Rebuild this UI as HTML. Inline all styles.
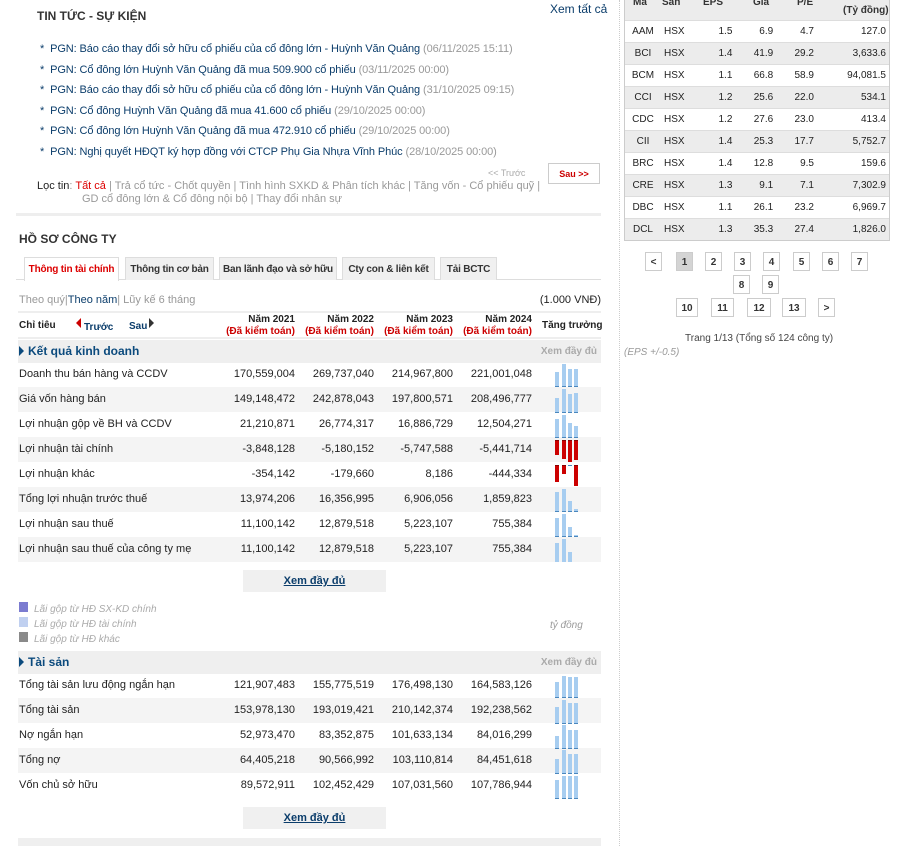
<!DOCTYPE html>
<html><head><meta charset="utf-8"><style>
*{margin:0;padding:0;box-sizing:border-box}
body{width:897px;height:846px;overflow:hidden;background:#fff;font-family:"Liberation Sans",Arial,sans-serif;font-size:11px;color:#222;position:relative}
.a{position:absolute;white-space:nowrap}
.blue{color:#0b3d6b}
.gray{color:#999}
.row{position:absolute;left:18px;width:583px;height:25px}
.row.g{background:#f4f4f4}
.row span{position:absolute;top:6px;white-space:nowrap;font-size:11px;color:#222}
.row .l{left:1px}
.v1{right:306px}.v2{right:227px}.v3{right:148px}.v4{right:69px}
.bar{position:absolute;width:4px;background:#a7cdf0}
.bar.p{border-bottom:1px solid #4a87bd}
.bar.n{background:#cc0000;border-top:1px solid #800}
.sec{position:absolute;left:18px;width:583px;height:23px;background:#efefef}
.sec b{position:absolute;left:10px;top:4px;font-size:12px;color:#0b4a7d}
.sec i{position:absolute;left:1px;top:6px;width:0;height:0;border-left:5px solid #0b4a7d;border-top:5px solid transparent;border-bottom:5px solid transparent}
.sec em{position:absolute;right:4px;top:6px;font-style:normal;font-weight:bold;font-size:10px;color:#aaa}
.btn{position:absolute;left:243px;width:143px;height:22px;background:#f0f0f0;text-align:center;padding-top:5px}
.btn a{color:#0b3d6b;font-weight:bold;font-size:11px;text-decoration:underline}
.tab{position:absolute;top:257px;height:23px;background:#f0f0f0;border:1px solid #ddd;border-bottom:none;text-align:center;padding-top:6px;font-size:10px;font-weight:bold;color:#333;white-space:nowrap;letter-spacing:-0.2px}
.rt td{height:22px;font-size:10px;color:#222;border-top:1px solid #ddd;padding:0 3px}
.pg{position:absolute;width:17px;height:19px;border:1px solid #ccc;background:#fff;text-align:center;font-weight:bold;font-size:10px;color:#333;padding-top:4px}
</style></head><body>

<div class="a" style="left:37px;top:9px;font-size:12px;font-weight:bold;color:#333">TIN TỨC - SỰ KIỆN</div>
<div class="a" style="left:550px;top:2px;font-size:12px;color:#0b3d6b">Xem tất cả</div>
<div class="a blue" style="left:40px;top:39px;line-height:20.6px;font-size:11px;letter-spacing:-0.1px">
<div>*&nbsp; PGN: Báo cáo thay đổi sở hữu cổ phiếu của cổ đông lớn - Huỳnh Văn Quảng <span class="gray">(06/11/2025 15:11)</span></div>
<div>*&nbsp; PGN: Cổ đông lớn Huỳnh Văn Quảng đã mua 509.900 cổ phiếu <span class="gray">(03/11/2025 00:00)</span></div>
<div>*&nbsp; PGN: Báo cáo thay đổi sở hữu cổ phiếu của cổ đông lớn - Huỳnh Văn Quảng <span class="gray">(31/10/2025 09:15)</span></div>
<div>*&nbsp; PGN: Cổ đông Huỳnh Văn Quảng đã mua 41.600 cổ phiếu <span class="gray">(29/10/2025 00:00)</span></div>
<div>*&nbsp; PGN: Cổ đông lớn Huỳnh Văn Quảng đã mua 472.910 cổ phiếu <span class="gray">(29/10/2025 00:00)</span></div>
<div>*&nbsp; PGN: Nghị quyết HĐQT ký hợp đồng với CTCP Phụ Gia Nhựa Vĩnh Phúc <span class="gray">(28/10/2025 00:00)</span></div>
</div>
<div class="a" style="left:488px;top:168px;font-size:9px;color:#aaa">&lt;&lt; Trước</div>
<div class="a" style="left:548px;top:163px;width:52px;height:21px;border:1px solid #ccc;text-align:center;padding-top:5px;font-size:9px;font-weight:bold;color:#c00">Sau &gt;&gt;</div>
<div class="a" style="left:37px;top:180px;font-size:11px;color:#999;line-height:13px"><span style="color:#222">Lọc tin</span>: <span style="color:#d00">Tất cả</span> | Trả cổ tức - Chốt quyền | Tình hình SXKD &amp; Phân tích khác | Tăng vốn - Cổ phiếu quỹ |<br><span style="padding-left:45px">GD cổ đông lớn &amp; Cổ đông nội bộ | Thay đổi nhân sự</span></div>
<div class="a" style="left:16px;top:213px;width:585px;height:3px;background:#eee"></div>

<div class="a" style="left:19px;top:232px;font-size:12px;font-weight:bold;color:#333">HỒ SƠ CÔNG TY</div>
<div class="a" style="left:16px;top:279px;width:585px;height:1px;background:#ddd"></div>
<div class="tab" style="left:24px;width:95px;background:#fff;color:#d00;height:24px">Thông tin tài chính</div>
<div class="tab" style="left:125px;width:89px">Thông tin cơ bản</div>
<div class="tab" style="left:219px;width:118px">Ban lãnh đạo và sở hữu</div>
<div class="tab" style="left:342px;width:93px">Cty con &amp; liên kết</div>
<div class="tab" style="left:440px;width:57px">Tải BCTC</div>

<div class="a" style="left:19px;top:294px;font-size:11px;color:#999">Theo quý|<span style="color:#0b3d6b">Theo năm</span>| Lũy kế 6 tháng</div>
<div class="a" style="right:296px;top:294px;font-size:11px;color:#222">(1.000 VNĐ)</div>
<div class="a" style="left:18px;top:311px;width:583px;height:2px;background:#eee"></div>
<div class="a" style="left:19px;top:320px;font-size:10px;font-weight:bold;color:#222">Chỉ tiêu</div>
<div class="a" style="left:76px;top:318px;width:0;height:0;border-right:5px solid #c00;border-top:5px solid transparent;border-bottom:5px solid transparent"></div>
<div class="a" style="left:84px;top:322px;font-size:10px;font-weight:bold;color:#0b3d6b">Trước</div>
<div class="a" style="left:129px;top:321px;font-size:10px;font-weight:bold;color:#0b3d6b">Sau</div>
<div class="a" style="left:149px;top:318px;width:0;height:0;border-left:5px solid #333;border-top:5px solid transparent;border-bottom:5px solid transparent"></div>
<div class="a" style="left:200px;top:314px;width:95px;text-align:right;font-size:10px;font-weight:bold;line-height:12px">Năm 2021<br><span style="color:#c00">(Đã kiểm toán)</span></div>
<div class="a" style="left:279px;top:314px;width:95px;text-align:right;font-size:10px;font-weight:bold;line-height:12px">Năm 2022<br><span style="color:#c00">(Đã kiểm toán)</span></div>
<div class="a" style="left:358px;top:314px;width:95px;text-align:right;font-size:10px;font-weight:bold;line-height:12px">Năm 2023<br><span style="color:#c00">(Đã kiểm toán)</span></div>
<div class="a" style="left:437px;top:314px;width:95px;text-align:right;font-size:10px;font-weight:bold;line-height:12px">Năm 2024<br><span style="color:#c00">(Đã kiểm toán)</span></div>
<div class="a" style="left:542px;top:320px;font-size:10px;font-weight:bold">Tăng trưởng</div>
<div class="a" style="left:18px;top:337px;width:583px;height:2px;background:#eee"></div>

<div class="sec" style="top:340px"><i></i><b>Kết quả kinh doanh</b><em>Xem đầy đủ</em></div>

<div class="row" style="top:362px"><span class="l">Doanh thu bán hàng và CCDV</span><span class="v1">170,559,004</span><span class="v2">269,737,040</span><span class="v3">214,967,800</span><span class="v4">221,001,048</span></div>
<div class="row g" style="top:387px"><span class="l">Giá vốn hàng bán</span><span class="v1">149,148,472</span><span class="v2">242,878,043</span><span class="v3">197,800,571</span><span class="v4">208,496,777</span></div>
<div class="row" style="top:412px"><span class="l">Lợi nhuận gộp về BH và CCDV</span><span class="v1">21,210,871</span><span class="v2">26,774,317</span><span class="v3">16,886,729</span><span class="v4">12,504,271</span></div>
<div class="row g" style="top:437px"><span class="l">Lợi nhuận tài chính</span><span class="v1">-3,848,128</span><span class="v2">-5,180,152</span><span class="v3">-5,747,588</span><span class="v4">-5,441,714</span></div>
<div class="row" style="top:462px"><span class="l">Lợi nhuận khác</span><span class="v1">-354,142</span><span class="v2">-179,660</span><span class="v3">8,186</span><span class="v4">-444,334</span></div>
<div class="row g" style="top:487px"><span class="l">Tổng lợi nhuận trước thuế</span><span class="v1">13,974,206</span><span class="v2">16,356,995</span><span class="v3">6,906,056</span><span class="v4">1,859,823</span></div>
<div class="row" style="top:512px"><span class="l">Lợi nhuận sau thuế</span><span class="v1">11,100,142</span><span class="v2">12,879,518</span><span class="v3">5,223,107</span><span class="v4">755,384</span></div>
<div class="row g" style="top:537px"><span class="l">Lợi nhuận sau thuế của công ty mẹ</span><span class="v1">11,100,142</span><span class="v2">12,879,518</span><span class="v3">5,223,107</span><span class="v4">755,384</span></div>

<div class="bar p" style="left:555px;top:372px;height:15px"></div><div class="bar p" style="left:562px;top:364px;height:23px"></div><div class="bar p" style="left:568px;top:369px;height:18px"></div><div class="bar p" style="left:574px;top:369px;height:18px"></div>
<div class="bar p" style="left:555px;top:398px;height:15px"></div><div class="bar p" style="left:562px;top:389px;height:24px"></div><div class="bar p" style="left:568px;top:394px;height:19px"></div><div class="bar p" style="left:574px;top:393px;height:20px"></div>
<div class="bar p" style="left:555px;top:419px;height:19px"></div><div class="bar p" style="left:562px;top:415px;height:23px"></div><div class="bar p" style="left:568px;top:423px;height:15px"></div><div class="bar p" style="left:574px;top:426px;height:12px"></div>
<div class="bar n" style="left:555px;top:440px;height:15px"></div><div class="bar n" style="left:562px;top:440px;height:19px"></div><div class="bar n" style="left:568px;top:440px;height:22px"></div><div class="bar n" style="left:574px;top:440px;height:20px"></div>
<div class="bar n" style="left:555px;top:465px;height:17px"></div><div class="bar n" style="left:562px;top:465px;height:9px"></div><div class="bar" style="left:568px;top:465px;height:1px;background:#4a87bd"></div><div class="bar n" style="left:574px;top:465px;height:21px"></div>
<div class="bar p" style="left:555px;top:492px;height:20px"></div><div class="bar p" style="left:562px;top:489px;height:23px"></div><div class="bar p" style="left:568px;top:501px;height:11px"></div><div class="bar p" style="left:574px;top:509px;height:3px"></div>
<div class="bar p" style="left:555px;top:518px;height:19px"></div><div class="bar p" style="left:562px;top:514px;height:23px"></div><div class="bar p" style="left:568px;top:527px;height:10px"></div><div class="bar p" style="left:574px;top:535px;height:2px"></div>
<div class="bar" style="left:555px;top:543px;height:19px"></div><div class="bar" style="left:562px;top:539px;height:23px"></div><div class="bar" style="left:568px;top:552px;height:10px"></div>

<div class="btn" style="top:570px"><a>Xem đầy đủ</a></div>

<div class="a" style="left:19px;top:602px;width:9px;height:10px;background:#7b7bd0"></div>
<div class="a" style="left:19px;top:617px;width:9px;height:10px;background:#c0d0f0"></div>
<div class="a" style="left:19px;top:632px;width:9px;height:10px;background:#8a8a8a"></div>
<div class="a" style="left:34px;top:602px;font-size:10px;font-style:italic;color:#aaa;line-height:15px">Lãi gộp từ HĐ SX-KD chính<br>Lãi gộp từ HĐ tài chính<br>Lãi gộp từ HĐ khác</div>
<div class="a" style="left:550px;top:620px;font-size:10px;font-style:italic;color:#999">tỷ đồng</div>

<div class="sec" style="top:651px"><i></i><b>Tài sản</b><em>Xem đầy đủ</em></div>
<div class="row" style="top:673px"><span class="l">Tổng tài sản lưu động ngắn hạn</span><span class="v1">121,907,483</span><span class="v2">155,775,519</span><span class="v3">176,498,130</span><span class="v4">164,583,126</span></div>
<div class="row g" style="top:698px"><span class="l">Tổng tài sản</span><span class="v1">153,978,130</span><span class="v2">193,019,421</span><span class="v3">210,142,374</span><span class="v4">192,238,562</span></div>
<div class="row" style="top:723px"><span class="l">Nợ ngắn hạn</span><span class="v1">52,973,470</span><span class="v2">83,352,875</span><span class="v3">101,633,134</span><span class="v4">84,016,299</span></div>
<div class="row g" style="top:748px"><span class="l">Tổng nợ</span><span class="v1">64,405,218</span><span class="v2">90,566,992</span><span class="v3">103,110,814</span><span class="v4">84,451,618</span></div>
<div class="row" style="top:773px"><span class="l">Vốn chủ sở hữu</span><span class="v1">89,572,911</span><span class="v2">102,452,429</span><span class="v3">107,031,560</span><span class="v4">107,786,944</span></div>

<div class="bar p" style="left:555px;top:682px;height:16px"></div><div class="bar p" style="left:562px;top:676px;height:22px"></div><div class="bar p" style="left:568px;top:677px;height:21px"></div><div class="bar p" style="left:574px;top:677px;height:21px"></div>
<div class="bar p" style="left:555px;top:707px;height:17px"></div><div class="bar p" style="left:562px;top:700px;height:24px"></div><div class="bar p" style="left:568px;top:703px;height:21px"></div><div class="bar p" style="left:574px;top:703px;height:21px"></div>
<div class="bar p" style="left:555px;top:736px;height:13px"></div><div class="bar p" style="left:562px;top:725px;height:24px"></div><div class="bar p" style="left:568px;top:730px;height:19px"></div><div class="bar p" style="left:574px;top:730px;height:19px"></div>
<div class="bar p" style="left:555px;top:759px;height:15px"></div><div class="bar p" style="left:562px;top:750px;height:24px"></div><div class="bar p" style="left:568px;top:754px;height:20px"></div><div class="bar p" style="left:574px;top:754px;height:20px"></div>
<div class="bar p" style="left:555px;top:780px;height:19px"></div><div class="bar p" style="left:562px;top:776px;height:23px"></div><div class="bar p" style="left:568px;top:776px;height:23px"></div><div class="bar p" style="left:574px;top:776px;height:23px"></div>

<div class="btn" style="top:807px"><a>Xem đầy đủ</a></div>
<div class="a" style="left:18px;top:838px;width:583px;height:8px;background:#efefef"></div>

<div class="a" style="left:619px;top:0;width:0;height:846px;border-left:1px dotted #ccc"></div>
<div class="a" style="left:624px;top:0;width:266px;height:241px;background:#ececec;border:1px solid #ccc;border-top:none"></div>
<div class="a" style="left:625px;top:0;font-size:10px;font-weight:bold;color:#333;width:264px;height:20px">
<span class="a" style="left:8px;top:-3px">Ma</span><span class="a" style="left:37px;top:-3px">San</span><span class="a" style="left:78px;top:-3px">EPS</span><span class="a" style="left:128px;top:-3px">Gia</span><span class="a" style="left:172px;top:-3px">P/E</span><span class="a" style="left:218px;top:5px">(Tỷ đồng)</span></div>
<table class="a rt" style="left:625px;top:20px;width:264px;border-collapse:collapse">
<tr style="background:#fff"><td style="width:36px;text-align:center">AAM</td><td>HSX</td><td style="text-align:right">1.5</td><td style="text-align:right">6.9</td><td style="text-align:right">4.7</td><td style="text-align:right">127.0</td></tr>
<tr><td style="text-align:center">BCI</td><td>HSX</td><td style="text-align:right">1.4</td><td style="text-align:right">41.9</td><td style="text-align:right">29.2</td><td style="text-align:right">3,633.6</td></tr>
<tr style="background:#fff"><td style="text-align:center">BCM</td><td>HSX</td><td style="text-align:right">1.1</td><td style="text-align:right">66.8</td><td style="text-align:right">58.9</td><td style="text-align:right">94,081.5</td></tr>
<tr><td style="text-align:center">CCI</td><td>HSX</td><td style="text-align:right">1.2</td><td style="text-align:right">25.6</td><td style="text-align:right">22.0</td><td style="text-align:right">534.1</td></tr>
<tr style="background:#fff"><td style="text-align:center">CDC</td><td>HSX</td><td style="text-align:right">1.2</td><td style="text-align:right">27.6</td><td style="text-align:right">23.0</td><td style="text-align:right">413.4</td></tr>
<tr><td style="text-align:center">CII</td><td>HSX</td><td style="text-align:right">1.4</td><td style="text-align:right">25.3</td><td style="text-align:right">17.7</td><td style="text-align:right">5,752.7</td></tr>
<tr style="background:#fff"><td style="text-align:center">BRC</td><td>HSX</td><td style="text-align:right">1.4</td><td style="text-align:right">12.8</td><td style="text-align:right">9.5</td><td style="text-align:right">159.6</td></tr>
<tr><td style="text-align:center">CRE</td><td>HSX</td><td style="text-align:right">1.3</td><td style="text-align:right">9.1</td><td style="text-align:right">7.1</td><td style="text-align:right">7,302.9</td></tr>
<tr style="background:#fff"><td style="text-align:center">DBC</td><td>HSX</td><td style="text-align:right">1.1</td><td style="text-align:right">26.1</td><td style="text-align:right">23.2</td><td style="text-align:right">6,969.7</td></tr>
<tr><td style="text-align:center">DCL</td><td>HSX</td><td style="text-align:right">1.3</td><td style="text-align:right">35.3</td><td style="text-align:right">27.4</td><td style="text-align:right">1,826.0</td></tr>
</table>

<div class="pg" style="left:645px;top:252px">&lt;</div>
<div class="pg" style="left:676px;top:252px;background:#d4d4d4">1</div>
<div class="pg" style="left:705px;top:252px">2</div>
<div class="pg" style="left:734px;top:252px">3</div>
<div class="pg" style="left:763px;top:252px">4</div>
<div class="pg" style="left:793px;top:252px">5</div>
<div class="pg" style="left:822px;top:252px">6</div>
<div class="pg" style="left:851px;top:252px">7</div>
<div class="pg" style="left:733px;top:275px">8</div>
<div class="pg" style="left:762px;top:275px">9</div>
<div class="pg" style="left:676px;top:298px;width:22px">10</div>
<div class="pg" style="left:711px;top:298px;width:23px">11</div>
<div class="pg" style="left:747px;top:298px;width:24px">12</div>
<div class="pg" style="left:782px;top:298px;width:24px">13</div>
<div class="pg" style="left:818px;top:298px">&gt;</div>
<div class="a" style="left:685px;top:333px;font-size:10px;color:#444">Trang 1/13 (Tổng số 124 công ty)</div>
<div class="a" style="left:624px;top:347px;font-size:10px;font-style:italic;color:#999">(EPS +/-0.5)</div>
</body></html>
